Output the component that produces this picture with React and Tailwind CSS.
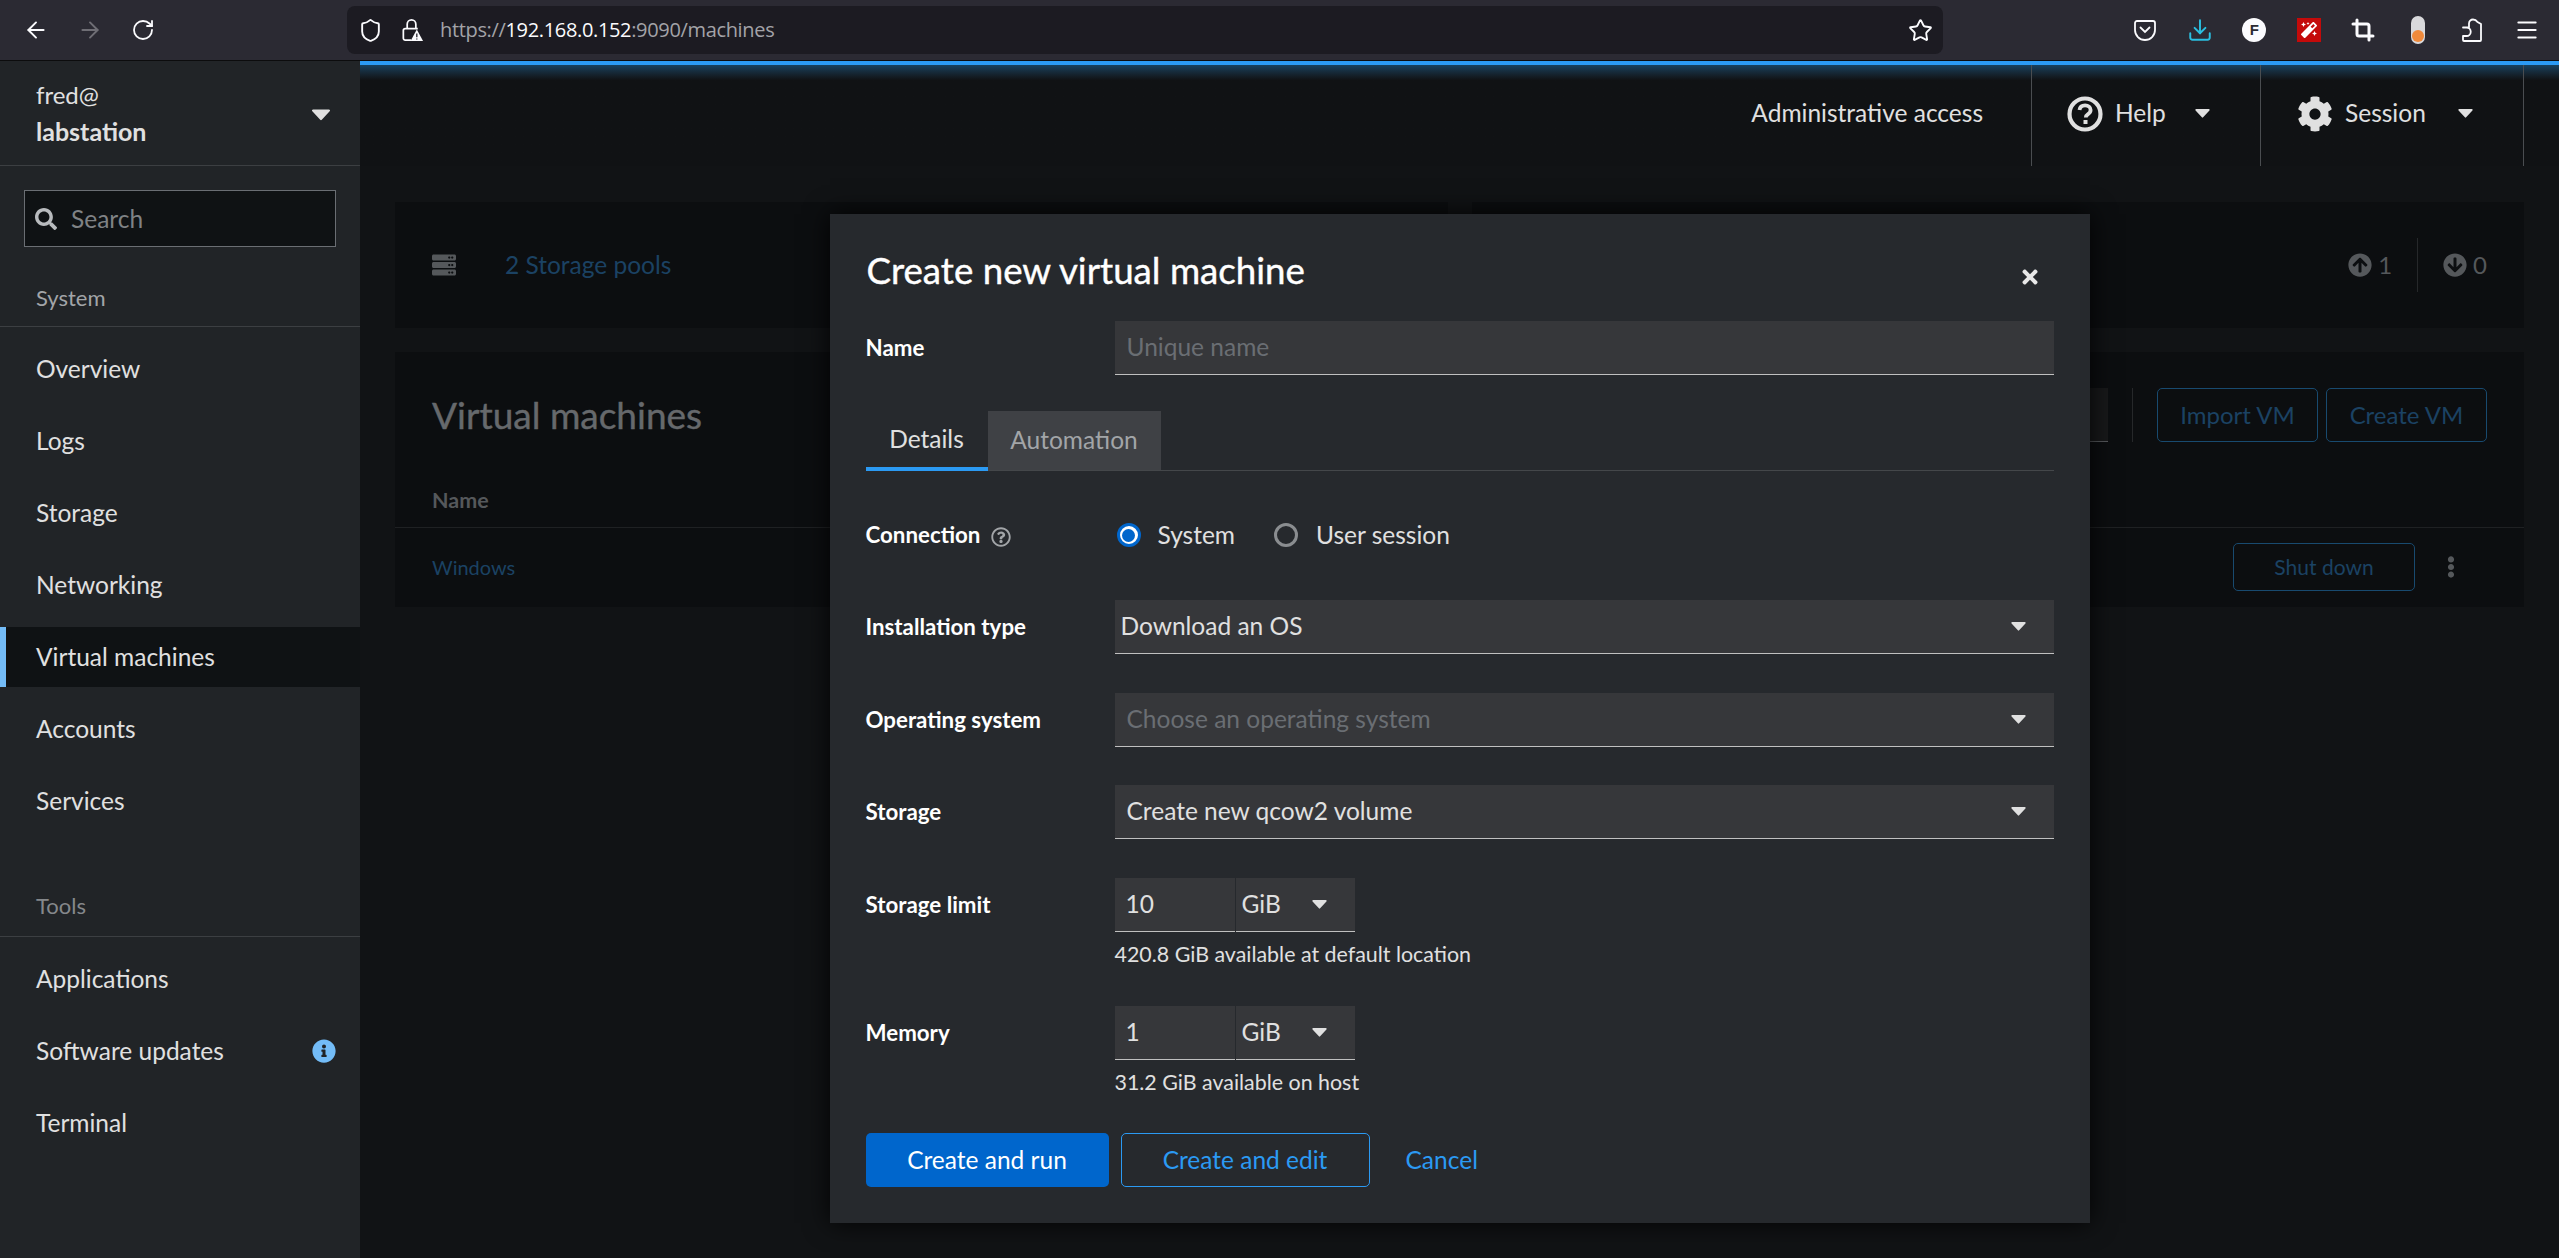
import React from "react";
import { ArrowLeft, ArrowRight, RotateCw, Shield, Star, Download, Crop, Menu } from "lucide-react";
import {
  FaSearch,
  FaRegQuestionCircle,
  FaCog,
  FaArrowCircleUp,
  FaArrowCircleDown,
  FaEllipsisV,
  FaTimes,
  FaInfoCircle,
  FaServer,
  FaMagic,
} from "react-icons/fa";

// --- Small shared bits ---
const Caret = ({ className = "" }) => (
  <svg viewBox="0 0 16 10" className={`w-[15px] h-[9px] fill-[#e0e0e0] ${className}`}>
    <path d="M1 0h14a1 1 0 0 1 .7 1.7L8.7 9.3a1 1 0 0 1-1.4 0L.3 1.7A1 1 0 0 1 1 0z" />
  </svg>
);

const HelpOutline = () => (
  <svg viewBox="0 0 36 36" className="w-9 h-9 text-[#e0e0e0]">
    <circle cx="18" cy="18" r="15.500" fill="none" stroke="currentColor" strokeWidth="4.200" />
    <path d="M12.500 14c.4-3 2.600-4.600 5.600-4.600 3.200 0 5.500 1.900 5.500 4.600 0 2.200-1.300 3.300-2.800 4.300-1.400.9-2 1.500-2 3.200" fill="none" stroke="currentColor" strokeWidth="3.800" />
    <rect x="16.500" y="24" width="4" height="4" fill="currentColor" />
  </svg>
);

const LockWarning = () => (
  <svg viewBox="0 0 24 26" className="w-6 h-[25px]" fill="none" stroke="#fbfbfe" strokeWidth="1.800">
    <path d="M7 11V6.500a4.500 4.500 0 0 1 9 0V11" />
    <path d="M11 23H5a2 2 0 0 1-2-2v-8a2 2 0 0 1 2-2h13" />
    <path d="M17 12l6.500 12h-13z" fill="#fbfbfe" stroke="none" />
    <path d="M17 16v4M17 21.200v1.200" stroke="#2b2a33" strokeWidth="1.400" />
  </svg>
);

const PocketIcon = () => (
  <svg viewBox="0 0 24 24" className="w-6 h-6" fill="none" stroke="#fbfbfe" strokeWidth="1.800">
    <path d="M4 3h16a2 2 0 0 1 2 2v7a10 10 0 0 1-20 0V5a2 2 0 0 1 2-2z" />
    <path d="M7.500 9.500L12 14l4.500-4.500" strokeLinecap="round" />
  </svg>
);

const ExtensionIcon = () => (
  <svg viewBox="0 0 20 24" className="w-5 h-6" fill="none" stroke="#fbfbfe" strokeWidth="1.800" strokeLinejoin="round">
    <path d="M1 9.500h6V5.500a4 4 0 0 1 4-4c2 0 3.500 1 4.500 2.500L19 6v16a1 1 0 0 1-1 1H2a1 1 0 0 1-1-1v-4h3.500a2.500 2.500 0 0 0 0-8.500H1z" />
  </svg>
);

const ToolIcon = ({ children }) => (
  <div className="w-[54.5px] flex justify-center items-center">{children}</div>
);

const BrowserBar = () => (
  <div className="h-[61px] shrink-0 bg-[#2b2a33] border-b border-[#0c0c0d] flex items-center">
    <div className="w-[347px] shrink-0 flex items-center pl-[23px] gap-[28px] text-[#fbfbfe]">
      <ArrowLeft size={26} strokeWidth={1.800} />
      <ArrowRight size={26} strokeWidth={1.800} className="text-[#6f6e75]" />
      <RotateCw size={24} strokeWidth={1.800} />
    </div>
    <div className="w-[1596px] h-12 bg-[#1c1b22] rounded-lg flex items-center pl-[11px] pr-[11px] text-[#fbfbfe]">
      <Shield size={25} strokeWidth={1.800} />
      <div className="ml-[17px] mr-[16px] flex">
        <LockWarning />
      </div>
      <span className="font-['Open_Sans',sans-serif] text-[20px] text-[#a3a3a8] tracking-[-0.34px]">
        https://<span className="text-[#fbfbfe]">192.168.0.152</span>:9090/machines
      </span>
      <Star size={25} strokeWidth={1.800} className="ml-auto mr-[-1px]" />
    </div>
    <div className="ml-auto mr-[5px] flex items-center">
      <ToolIcon>
        <PocketIcon />
      </ToolIcon>
      <ToolIcon>
        <Download size={26} strokeWidth={1.800} className="text-[#2bbfe0]" />
      </ToolIcon>
      <ToolIcon>
        <div className="w-6 h-6 rounded-full bg-[#fbfbfe] flex items-center justify-center text-[#2b2a33] text-[15px] font-bold font-['Liberation_Sans',sans-serif]">
          F
        </div>
      </ToolIcon>
      <ToolIcon>
        <div className="w-6 h-6 bg-[#c40a0a] flex items-center justify-center">
          <FaMagic className="text-white text-[16px]" />
        </div>
      </ToolIcon>
      <ToolIcon>
        <Crop size={24} strokeWidth={3} className="text-[#fbfbfe]" />
      </ToolIcon>
      <ToolIcon>
        <div className="w-[14px] h-[28px] rounded-full bg-[#d9d9dc] flex items-end justify-center pb-[2px]">
          <div className="w-3 h-3 rounded-full bg-[#f08a3c]" />
        </div>
      </ToolIcon>
      <ToolIcon>
        <ExtensionIcon />
      </ToolIcon>
      <ToolIcon>
        <Menu size={26} strokeWidth={1.800} className="text-[#fbfbfe]" />
      </ToolIcon>
    </div>
  </div>
);

const navSystem = ["Overview", "Logs", "Storage", "Networking", "Virtual machines", "Accounts", "Services"];
const navTools = ["Applications", "Software updates", "Terminal"];

const NavItem = ({ label }) => {
  const active = label === "Virtual machines";
  return (
    <div
      className={`h-[60px] mb-3 flex items-center justify-between pl-9 pr-6 text-[24.500px] text-[#e0e0e0] ${
        active ? "bg-[#0f1214] border-l-[6px] border-[#73bcf7] pl-[30px]" : ""
      }`}
    >
      {label}
      {label === "Software updates" && <FaInfoCircle className="text-[#73bcf7] text-[24px]" />}
    </div>
  );
};

const Sidebar = () => (
  <aside className="w-[360px] shrink-0 bg-[#212427] flex flex-col">
    <div className="h-[105px] shrink-0 border-b border-[#3c3f42] flex items-center justify-between pl-9 pr-[30px] text-[24px] text-[#e0e0e0]">
      <div className="leading-[36px]">
        <div>fred@</div>
        <div className="font-bold text-[25px]">labstation</div>
      </div>
      <Caret className="w-[18px] h-[12px] mt-[3px]" />
    </div>
    <div className="mx-6 mt-[24px] h-[57px] shrink-0 bg-[#0f1214] border border-[#6a6e73] flex items-center pl-[10px] text-[#b8bbbe]">
      <FaSearch className="text-[22px]" />
      <span className="ml-[14px] mt-[2px] text-[24.500px] text-[#7f8285]">Search</span>
    </div>
    <div className="h-[80px] shrink-0 border-b border-[#3c3f42] pl-9 pt-[36px] text-[22px] leading-[30px] text-[#a2a5a8]">System</div>
    <div className="pt-[12px]">
      {navSystem.map((item) => (
        <NavItem key={item} label={item} />
      ))}
    </div>
    <div className="h-[77px] mt-[17px] shrink-0 border-b border-[#3c3f42] pl-9 pt-[31px] text-[22px] leading-[30px] text-[#85888b]">Tools</div>
    <div className="pt-[12px]">
      {navTools.map((item) => (
        <NavItem key={item} label={item} />
      ))}
    </div>
  </aside>
);

// dimmed page behind the dialog
const TopBar = () => (
  <div className="h-[105px] shrink-0 flex items-stretch justify-end pr-[35px] border-t-4 border-[#2b9af3] bg-gradient-to-b from-[#17415e] from-0% to-[#101214] to-[15%] text-[24.500px] text-[#e0e0e0]">
    <div className="flex items-center pr-[48px] pb-[4px]">Administrative access</div>
    <div className="w-[229px] border-l border-[#4a4d50] flex items-center pl-[35px] pb-[4px]">
      <HelpOutline />
      <span className="ml-[12px]">Help</span>
      <Caret className="ml-[29px]" />
    </div>
    <div className="w-[264px] border-x border-[#4a4d50] flex items-center pl-[36px] pb-[4px]">
      <FaCog className="text-[36px]" />
      <span className="ml-[12px]">Session</span>
      <Caret className="ml-[32px]" />
    </div>
  </div>
);

const VmButton = ({ children, className = "" }) => (
  <div className={`h-[54px] border border-[#184a6f] rounded-[5px] flex items-center justify-center text-[24px] text-[#1b4263] ${className}`}>
    {children}
  </div>
);

const Page = () => (
  <div className="pt-9 pl-[35px] pr-[35px] flex flex-col gap-6 font-['Lato',sans-serif]">
    <div className="grid grid-cols-2 gap-6">
      <div className="h-[126px] bg-[#0c0e10] flex items-center pl-[37px] text-[24.500px] text-[#1b4263]">
        <FaServer className="text-[#55585b] text-[24px]" />
        <span className="ml-[49px]">2 Storage pools</span>
      </div>
      <div className="h-[126px] bg-[#0c0e10] flex items-center justify-end pr-[37px] text-[24px] text-[#55585b]">
        <FaArrowCircleUp className="text-[24px]" />
        <span className="ml-[6px]">1</span>
        <div className="w-px h-[54px] bg-[#26282a] mx-[25px]" />
        <FaArrowCircleDown className="text-[24px]" />
        <span className="ml-[6px]">0</span>
      </div>
    </div>
    <div className="h-[255px] bg-[#0c0e10] flex flex-col">
      <div className="h-[90px] mt-9 shrink-0 flex items-start pl-[37px] pr-[37px]">
        <h2 className="text-[37px] leading-[54px] text-[#66696c] [-webkit-text-stroke:0.4px_currentColor]">Virtual machines</h2>
        <div className="ml-auto w-[200px] h-[54px] bg-[#18191a] border-b border-[#55585b]" />
        <div className="w-px h-[54px] bg-[#26282a] mx-[24px]" />
        <VmButton className="w-[161px]">Import VM</VmButton>
        <VmButton className="w-[161px] ml-2">Create VM</VmButton>
      </div>
      <div className="h-[50px] shrink-0 border-b border-[#1f2123] pl-[37px] pt-[6px] text-[21.500px] font-bold text-[#55585b]">Name</div>
      <div className="h-[78px] flex items-center pl-[37px] pr-[62px] text-[20px] text-[#1b4263]">
        Windows
        <VmButton className="w-[182px] !h-[48px] ml-auto !text-[21px]">Shut down</VmButton>
        <FaEllipsisV className="ml-[25px] text-[22px] text-[#55585b]" />
      </div>
    </div>
  </div>
);

// --- Dialog form ---
const Row = ({ label, extra, className = "", children }) => (
  <div className={`flex items-center h-[54px] ${className}`}>
    <div className="w-[249px] shrink-0 flex items-center text-[22.300px] font-bold text-white">
      {label}
      {extra}
    </div>
    {children}
  </div>
);

const SelectBox = ({ value, muted }) => (
  <div className="flex-1 h-[54px] bg-[#36373a] border-b border-[#c0c0c0] flex items-center justify-between pl-3 pr-[28px]">
    <span className={muted ? "text-[#6a6e73]" : "text-[#e0e0e0]"}>{value}</span>
    <Caret />
  </div>
);

const SizeInput = ({ value }) => (
  <div className="flex h-[54px] w-[240px] gap-px">
    <div className="w-[120px] bg-[#36373a] border-b border-[#c0c0c0] flex items-center pl-[11px] text-[#e0e0e0]">{value}</div>
    <div className="flex-1 bg-[#36373a] border-b border-[#c0c0c0] flex items-center pl-[6px] text-[#e0e0e0]">
      GiB
      <Caret className="ml-[31px]" />
    </div>
  </div>
);

const Radio = ({ checked }) => (
  <div
    className={`w-6 h-6 rounded-full flex items-center justify-center border-[3px] ${
      checked ? "border-[#0066cc] bg-white" : "border-[#8a8d90]"
    }`}
  >
    {checked && <div className="w-[13px] h-[13px] rounded-full bg-[#0066cc]" />}
  </div>
);

const Dialog = () => (
  <div className="absolute inset-0 flex justify-center items-start pt-[153px] font-['Lato',sans-serif]">
    <div className="w-[1260px] h-[1009px] bg-[#26292d] shadow-[0_0_24px_rgba(0,0,0,0.9)] px-9 text-[24.500px]">
      <div className="h-[107px] flex items-center justify-between pt-[7px]">
        <h1 className="text-[36.700px] ml-[1px] text-white [-webkit-text-stroke:0.4px_currentColor]">Create new virtual machine</h1>
        <FaTimes className="text-[22px] text-[#e8e8e8] mr-[13px] mt-[11px]" />
      </div>
      <Row label="Name">
        <div className="flex-1 h-[54px] bg-[#36373a] border-b border-[#c0c0c0] flex items-center pl-3 text-[#6a6e73]">Unique name</div>
      </Row>
      <div className="mt-9 h-[60px] flex border-b border-[#44474a]">
        <div className="w-[122px] h-[60px] border-b-4 border-[#2b9af3] flex items-center justify-center text-[#e0e0e0]">Details</div>
        <div className="w-[173px] h-[59px] bg-[#3f4145] flex items-center justify-center text-[#a2a5a8]">Automation</div>
      </div>
      <Row
        label="Connection"
        className="mt-[37px]"
        extra={<FaRegQuestionCircle className="ml-[11px] mt-[3px] text-[20px] text-[#a2a5a8]" />}
      >
        <div className="flex items-center ml-[2px] text-[#e0e0e0]">
          <Radio checked />
          <span className="ml-[17px]">System</span>
          <div className="ml-[39px] flex items-center">
            <Radio />
            <span className="ml-[18px]">User session</span>
          </div>
        </div>
      </Row>
      <Row label="Installation type" className="mt-[38px]">
        <SelectBox value={<span className="-ml-[6px]">Download an OS</span>} />
      </Row>
      <Row label="Operating system" className="mt-[39px]">
        <SelectBox value="Choose an operating system" muted />
      </Row>
      <Row label="Storage" className="mt-[38px]">
        <SelectBox value="Create new qcow2 volume" />
      </Row>
      <Row label="Storage limit" className="mt-[39px]">
        <SizeInput value="10" />
      </Row>
      <div className="pl-[249px] h-[36px] mt-[4px] flex items-center text-[21.400px] text-[#e0e0e0]">420.8 GiB available at default location</div>
      <Row label="Memory" className="mt-[34px]">
        <SizeInput value="1" />
      </Row>
      <div className="pl-[249px] h-[36px] mt-[4px] flex items-center text-[21.400px] text-[#e0e0e0]">31.2 GiB available on host</div>
      <div className="mt-[33px] flex items-center">
        <div className="w-[243px] h-[54px] bg-[#0066cc] rounded-[5px] flex items-center justify-center text-white">Create and run</div>
        <div className="w-[249px] h-[54px] ml-3 border border-[#2b9af3] rounded-[5px] flex items-center justify-center text-[#2b9af3]">Create and edit</div>
        <div className="ml-9 text-[#2b9af3]">Cancel</div>
      </div>
    </div>
  </div>
);

const App = () => (
  <div className="w-[2559px] h-[1258px] overflow-hidden flex flex-col bg-[#111315] font-['Lato',sans-serif]">
    <BrowserBar />
    <div className="flex flex-1 min-h-0">
      <Sidebar />
      <main className="relative flex-1 min-w-0">
        <TopBar />
        <Page />
        <Dialog />
      </main>
    </div>
  </div>
);

export default App;
